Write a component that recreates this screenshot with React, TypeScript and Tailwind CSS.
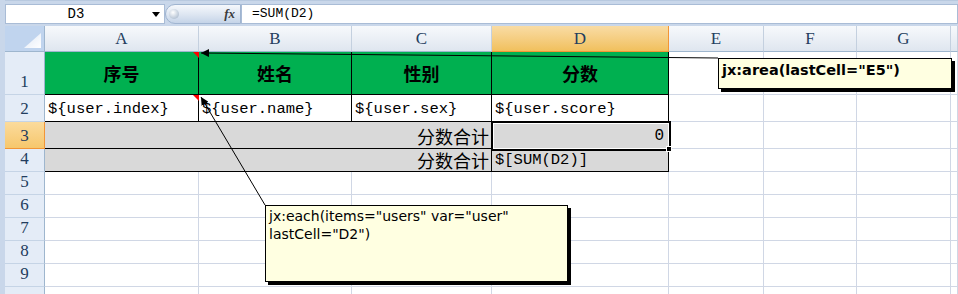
import React from "react";

const mono = "font-['Liberation_Mono','Noto_Sans_CJK_SC',monospace]";
const cjk = "font-['Noto_Sans_CJK_SC',sans-serif]";
const head = "font-['Liberation_Serif','Noto_Sans_CJK_SC',serif] text-[17px] text-[#233d5e]";

const letters = ["A", "B", "C", "D", "E", "F", "G", ""];

function ColHead({ label, selected }: { label: string; selected?: boolean }) {
  return (
    <div
      className={
        "flex items-center justify-center border-b border-r " +
        head +
        (selected
          ? " bg-gradient-to-b from-[#f9dca4] to-[#f1c05c] border-[#f29536]"
          : " bg-gradient-to-b from-[#f7f9fc] to-[#dfe6ef] border-r-[#c4d0df] border-b-[#9eb6ce]")
      }
    >
      {label}
    </div>
  );
}

function RowHead({ n, selected }: { n?: number; selected?: boolean }) {
  return (
    <div
      className={
        "flex items-end justify-center pb-[1px] leading-none border-b border-r " +
        head +
        (selected
          ? " bg-gradient-to-b from-[#fbdb9c] to-[#f6c76c] border-[#f29536]"
          : " bg-[#e4ecf7] border-r-[#9eb6ce] border-b-[#c5d4e6]")
      }
    >
      {n !== undefined && <span className="pb-[3px]">{n}</span>}
    </div>
  );
}

function Blanks({ count }: { count: number }) {
  return (
    <>
      {Array.from({ length: count }).map((_, i) => (
        <div key={i} className="border-b border-r border-[#d0d7e5] bg-white" />
      ))}
    </>
  );
}

export default function App() {
  const headers = ["序号", "姓名", "性别", "分数"];
  const fields = ["${user.index}", "${user.name}", "${user.sex}", "${user.score}"];

  return (
    <div className="relative w-[958px] h-[294px] overflow-hidden bg-[#c9d7ea] pl-[5px]">
      {/* Formula bar */}
      <div className="h-[26px] pt-[3px] pb-[3px] flex border-t border-[#b8c9df]">
        <div className="w-[160px] h-[20px] bg-white border border-[#a9bcd6] flex items-center relative">
          <span className={"w-[140px] text-center text-[14px] text-black " + mono}>D3</span>
          <svg width="8" height="5" className="absolute left-[146px] top-[7px]">
            <polygon points="0,0 8,0 4,5" fill="#000" />
          </svg>
        </div>
        <div className="w-[76px] h-[20px] rounded-l-full bg-gradient-to-b from-[#f5f8fc] via-[#dfe7f2] to-[#c5d4e8] border border-[#9fb4d0] flex items-center justify-between pl-[3px] pr-[5px]">
          <span className="w-[10px] h-[10px] rounded-full bg-[radial-gradient(circle_at_40%_35%,#ffffff,#b9c6d6_70%,#8d9db3)]" />
          <span className="font-['Liberation_Serif',serif] italic font-bold text-[13px] text-[#3b3b3b]">fx</span>
        </div>
        <div className="flex-1 h-[20px] bg-white border border-[#a9bcd6] flex items-center pl-[10px]">
          <span className={"text-[13px] text-black " + mono}>=SUM(D2)</span>
        </div>
      </div>

      {/* Sheet */}
      <div className="grid grid-cols-[40px_154px_153px_140px_177px_95px_93px_94px_1fr] grid-rows-[26px_43px_27px_27px_23px_23px_23px_23px_23px_23px_23px] bg-white">
        {/* corner */}
        <div className="bg-[#c0d4ee] border-r border-b border-[#9eb6ce] flex items-end justify-end p-[3px]">
          <svg width="17" height="15">
            <defs>
              <linearGradient id="cg" x1="0" y1="0" x2="1" y2="1">
                <stop offset="0" stopColor="#dfe8f5" />
                <stop offset="1" stopColor="#ffffff" />
              </linearGradient>
            </defs>
            <polygon points="17,0 17,15 0,15" fill="url(#cg)" />
          </svg>
        </div>
        {letters.map((l) => (
          <ColHead key={l || "h"} label={l} selected={l === "D"} />
        ))}

        {/* row 1 */}
        <RowHead n={1} />
        {headers.map((h) => (
          <div
            key={h}
            className={"bg-[#00b050] border-r border-b border-black flex items-center justify-center text-[18px] font-bold text-black " + cjk}
          >
            {h}
          </div>
        ))}
        <Blanks count={4} />

        {/* row 2 */}
        <RowHead n={2} />
        {fields.map((f) => (
          <div
            key={f}
            className={"bg-white border-r border-b border-black flex items-end pl-[3px] pb-[2px] text-[15.5px] leading-[20px] text-black whitespace-nowrap " + mono}
          >
            {f}
          </div>
        ))}
        <Blanks count={4} />

        {/* row 3 */}
        <RowHead n={3} selected />
        <div className={"col-span-3 bg-[#d9d9d9] border-r border-b border-black flex items-end justify-end pr-[2px] pb-[1px] text-[18px] leading-[22px] text-black " + cjk}>
          分数合计
        </div>
        <div className={"bg-[#d9d9d9] border-r border-b border-black flex items-end justify-end pr-[4px] pb-[2px] text-[16px] leading-[20px] text-black " + mono}>
          0
        </div>
        <Blanks count={4} />

        {/* row 4 */}
        <RowHead n={4} />
        <div className={"col-span-3 bg-[#d9d9d9] border-r border-b border-black flex items-end justify-end pr-[2px] text-[18px] leading-[22px] text-black " + cjk}>
          分数合计
        </div>
        <div className={"bg-[#d9d9d9] border-r border-b border-black flex items-end pl-[3px] pb-[1px] text-[15.5px] leading-[20px] text-black " + mono}>
          $[SUM(D2)]
        </div>
        <Blanks count={4} />

        {[5, 6, 7, 8, 9].map((n) => (
          <React.Fragment key={n}>
            <RowHead n={n} />
            <Blanks count={8} />
          </React.Fragment>
        ))}
        <RowHead />
        <Blanks count={8} />
      </div>

      {/* Selection on D3 */}
      <div className="absolute left-[491px] top-[121px] w-[180px] h-[30px] border-2 border-black shadow-[inset_0_0_0_1px_#ffffff]" />
      <div className="absolute left-[666px] top-[146px] w-[6px] h-[6px] bg-black border border-white" />

      {/* Comment pointers */}
      <svg className="absolute left-0 top-0 pointer-events-none" width="958" height="294">
        <defs>
          <marker id="ah" markerWidth="9" markerHeight="8" refX="8" refY="4" orient="auto" markerUnits="userSpaceOnUse">
            <polygon points="8,4 0,0 0,8" fill="#000" />
          </marker>
        </defs>
        <polygon points="193,52 199,52 199,58" fill="#ff0000" />
        <polygon points="193,95 199,95 199,101" fill="#ff0000" />
        <line x1="718" y1="58" x2="201" y2="53" stroke="#000" strokeWidth="1" markerEnd="url(#ah)" />
        <line x1="265" y1="205" x2="201" y2="97" stroke="#000" strokeWidth="1" markerEnd="url(#ah)" />
      </svg>

      {/* Comments */}
      <div className="absolute left-[718px] top-[58px] w-[234px] h-[31px] bg-[#ffffe1] border border-black shadow-[3px_3px_0_#000] pl-[3px] pt-[2px] font-['DejaVu_Sans',sans-serif] font-bold text-[14.5px] leading-[18px] text-black whitespace-nowrap">
        jx:area(lastCell="E5")
      </div>
      <div className="absolute left-[265px] top-[205px] w-[303px] h-[77px] bg-[#ffffe1] border border-black shadow-[3px_3px_0_#000] pl-[3px] pt-[1px] font-['DejaVu_Sans',sans-serif] text-[14px] leading-[18px] text-black">
        <div className="whitespace-nowrap">jx:each(items="users" var="user"</div>
        <div className="whitespace-nowrap">lastCell="D2")</div>
      </div>
    </div>
  );
}
